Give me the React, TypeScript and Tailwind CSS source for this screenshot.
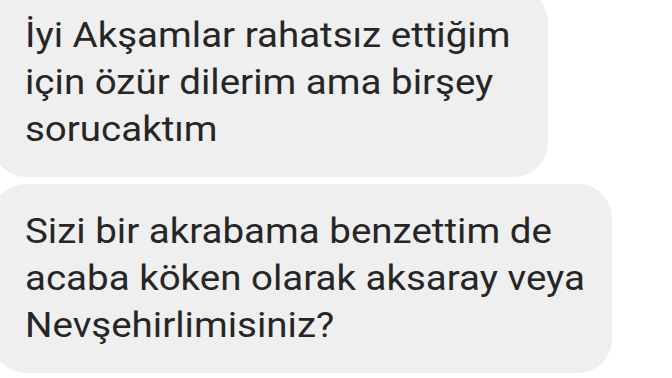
import React from "react"

const Bubble = ({ lines, width }: { lines: string[]; width: string }) => (
  <div className={`${width} rounded-[34px] bg-[#efefef] pl-[33px] pr-6 py-6 text-[35px] leading-[47px] text-[#262626]`}>
    <div className="origin-left scale-x-[1.1]">
      {lines.map((l, i) => (
        <div key={i} className="whitespace-nowrap">{l}</div>
      ))}
    </div>
  </div>
)

const App = () => {
  return (
    <div className="w-[672px] h-[378px] overflow-hidden bg-white" style={{ fontFamily: "Roboto, 'Noto Sans', sans-serif" }}>
      <div className="-ml-2 -mt-3 flex flex-col items-start gap-[7px]">
        <Bubble
          width="w-[556px]"
          lines={["İyi Akşamlar rahatsız ettiğim", "için özür dilerim ama birşey", "sorucaktım"]}
        />
        <Bubble
          width="w-[620px]"
          lines={["Sizi bir akrabama benzettim de", "acaba köken olarak aksaray veya", "Nevşehirlimisiniz?"]}
        />
      </div>
    </div>
  )
}

export default App
